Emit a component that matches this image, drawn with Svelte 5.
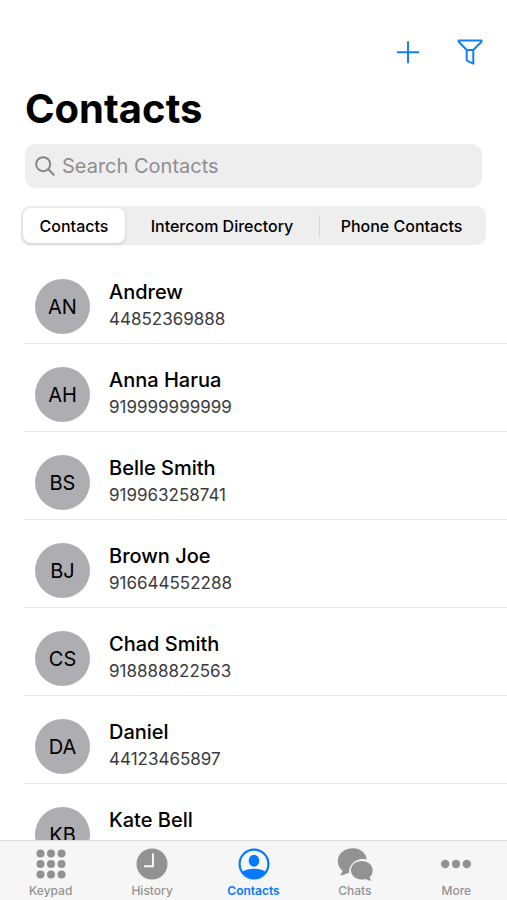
<script lang="ts">
	type Contact = { name: string; initials: string; phone: string };

	const contacts: Contact[] = [
		{ name: 'Andrew', initials: 'AN', phone: '44852369888' },
		{ name: 'Anna Harua', initials: 'AH', phone: '919999999999' },
		{ name: 'Belle Smith', initials: 'BS', phone: '919963258741' },
		{ name: 'Brown Joe', initials: 'BJ', phone: '916644552288' },
		{ name: 'Chad Smith', initials: 'CS', phone: '918888822563' },
		{ name: 'Daniel', initials: 'DA', phone: '44123465897' },
		{ name: 'Kate Bell', initials: 'KB', phone: '' }
	];

	const sources = ['Contacts', 'Intercom Directory', 'Phone Contacts'];
	const tabs = ['Keypad', 'History', 'Contacts', 'Chats', 'More'];
	const steps = [5.5, 16, 26.5];

	let source = $state('Contacts');
	let tab = $state('Contacts');
	let query = $state('');

	let visible = $derived(
		contacts.filter((contact) => contact.name.toLowerCase().includes(query.toLowerCase()))
	);
</script>

<div class="screen">
	<header>
		<div class="actions">
			<button class="action" aria-label="Add contact">
				<svg width="26" height="26" viewBox="0 0 26 26">
					<path d="M13 3v20.5M2.7 13.2h20.6" />
				</svg>
			</button>
			<button class="action" aria-label="Filter contacts">
				<svg width="26" height="26" viewBox="0 0 26 26">
					<path d="M1.7 1.5h22.8v1.2L16.3 11H9.7L1.7 2.7zM9.7 11v10.6l6.6 3V11" />
				</svg>
			</button>
		</div>
		<h1>Contacts</h1>
		<label class="search">
			<svg width="20" height="20" viewBox="0 0 20 20">
				<circle cx="8.2" cy="8.2" r="7" />
				<path d="M13.3 13.3l5.4 5.4" />
			</svg>
			<input type="search" placeholder="Search Contacts" aria-label="Search Contacts" bind:value={query} />
		</label>
		<div class="segments">
			{#each sources as item}
				<button
					class="segment"
					class:segment-active={source === item}
					aria-pressed={source === item}
					onclick={() => (source = item)}
				>
					{item}
				</button>
			{/each}
		</div>
	</header>

	<ul class="list">
		{#each visible as contact}
			<li class="contact">
				<div class="avatar">{contact.initials}</div>
				<div class="details">
					<div class="name">{contact.name}</div>
					<div class="phone">{contact.phone}</div>
				</div>
			</li>
		{/each}
	</ul>

	<nav>
		{#each tabs as item}
			<button
				class="tab"
				class:tab-active={tab === item}
				aria-current={tab === item ? 'page' : undefined}
				onclick={() => (tab = item)}
			>
				<svg width="36" height="34" viewBox="-2 -1 36 34">
					{#if item === 'Keypad'}
						{#each steps as y}
							{#each steps as x}
								<circle cx={x} cy={y} r="4" />
							{/each}
						{/each}
					{:else if item === 'History'}
						<circle cx="16" cy="16" r="15.5" />
						<path class="hands" d="M17 5.5v12.8H8" />
					{:else if item === 'Contacts'}
						<circle class="ring" cx="16" cy="16" r="14.4" />
						<ellipse cx="16" cy="12.7" rx="5.3" ry="6" />
						<path d="M4.5 23.8C7 21.6 11 20.7 16 20.7s9 .9 11.5 3.1C25 28 21 30.6 16 30.6S7 28 4.5 23.8z" />
					{:else if item === 'Chats'}
						<path
							d="M14 .3C5.5 .3-1.2 5.8-1.2 13c0 4.200 1.900 7.500 4.700 9.800-.2 1.800-1.200 3.200-2.700 4.300 2.900.3 5.500-.5 7.500-2.100.6.2 1.200.3 1.800.3C9.600 17.500 15.500 11.300 24 11.100c1.300 0 2.500.1 3.700.4C27.200 5.200 21.500.3 14 .3z"
						/>
						<path
							d="M22.8 13c-6.200 0-10.900 4.200-10.900 9.300s4.700 9.300 10.900 9.300c1.500 0 3-.2 4.200-.7 1.700 1.300 3.500 1.900 5.700 1.500-1.100-.8-1.800-1.900-2-3.100 1.900-1.700 3-4.100 3-7 0-5.100-4.700-9.300-10.900-9.300z"
						/>
					{:else}
						<circle cx="5.2" cy="16" r="4.2" />
						<circle cx="16" cy="16" r="4.2" />
						<circle cx="26.8" cy="16" r="4.2" />
					{/if}
				</svg>
				{item}
			</button>
		{/each}
	</nav>
</div>

<style>
	:global(body) {
		margin: 0;
		background: #fff;
	}

	.screen {
		display: flex;
		flex-direction: column;
		height: 100vh;
		overflow: hidden;
		font-family: Inter, 'Liberation Sans', sans-serif;
		color: #000;
	}

	button {
		margin: 0;
		padding: 0;
		border: none;
		background: none;
		font: inherit;
		color: inherit;
		cursor: pointer;
	}

	header {
		flex: none;
		padding: 39px 21px 11px;
	}

	.actions {
		display: flex;
		justify-content: flex-end;
		gap: 36px;
		padding-right: 3px;
	}

	.action {
		display: flex;
	}

	.action svg {
		fill: none;
		stroke: #1480f5;
		stroke-width: 2;
		stroke-linejoin: round;
		stroke-linecap: round;
	}

	h1 {
		margin: 20px 4px 11px;
		font-size: 40px;
		line-height: 48px;
		font-weight: 700;
	}

	.search {
		display: flex;
		align-items: center;
		gap: 7px;
		height: 44px;
		margin: 0 4px 18px;
		padding: 0 10px;
		border-radius: 11px;
		background: #eee;
	}

	.search svg {
		flex: none;
		fill: none;
		stroke: #858588;
		stroke-width: 2;
		stroke-linecap: round;
	}

	.search input {
		flex: 1;
		min-width: 0;
		padding: 0;
		border: none;
		outline: none;
		background: none;
		font: inherit;
		font-size: 20px;
		color: #000;
		appearance: none;
	}

	.search input::placeholder {
		color: #8e8e92;
		opacity: 1;
	}

	.segments {
		display: grid;
		grid-template-columns: 102fr 194fr 165fr;
		height: 35px;
		padding: 2px;
		border-radius: 9px;
		background: #eee;
	}

	.segment {
		font-size: 16px;
		font-weight: 500;
		white-space: nowrap;
	}

	.segment-active {
		border-radius: 8px;
		background: #fff;
		box-shadow: 0 2px 4px rgba(0, 0, 0, 0.12);
	}

	.segment:not(.segment-active) + .segment:not(.segment-active) {
		background: linear-gradient(#d6d6d8, #d6d6d8) left center / 1px 22px no-repeat;
	}

	.list {
		flex: 1;
		min-height: 0;
		margin: 0;
		padding: 0 0 0 25px;
		overflow-y: auto;
		scrollbar-width: none;
		list-style: none;
	}

	.contact {
		display: flex;
		gap: 19px;
		padding: 23px 10px 9px;
		border-bottom: 1px solid #e6e6e8;
	}

	.avatar {
		flex: none;
		width: 55px;
		height: 55px;
		border-radius: 50%;
		background: #aeaeb2;
		font-size: 20px;
		line-height: 56px;
		text-align: center;
	}

	.name {
		font-size: 20px;
		line-height: 26px;
		font-weight: 500;
	}

	.phone {
		font-size: 17px;
		line-height: 29px;
		font-weight: 400;
		color: #3a3a3c;
	}

	nav {
		flex: none;
		display: flex;
		border-top: 1px solid #dcdcdc;
		background: #f6f6f6;
	}

	.tab {
		flex: 1;
		display: flex;
		flex-direction: column;
		align-items: center;
		gap: 2px;
		padding: 6px 0 1px;
		font-size: 12px;
		line-height: 16px;
		font-weight: 500;
		color: #929292;
	}

	.tab svg {
		fill: currentColor;
	}

	.tab-active {
		color: #067aff;
		font-weight: 600;
	}

	.hands {
		fill: none;
		stroke: #f6f6f6;
		stroke-width: 2;
	}

	.ring {
		fill: none;
		stroke: currentColor;
		stroke-width: 2.2;
	}
</style>
